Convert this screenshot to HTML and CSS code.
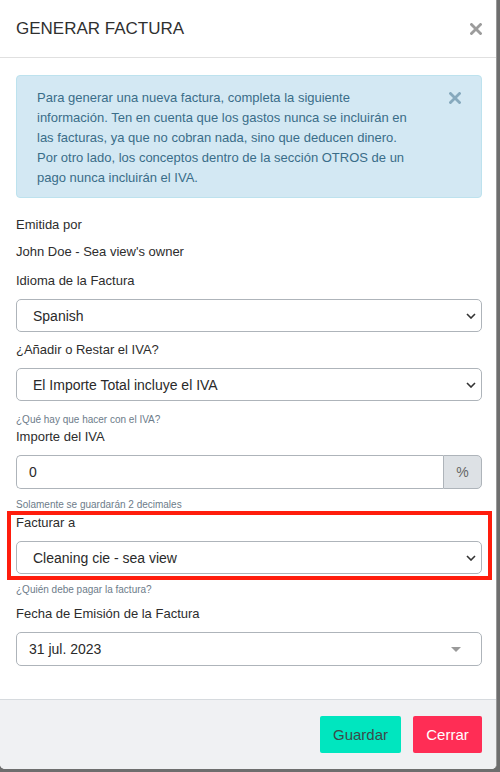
FILE: index.html
```html
<!DOCTYPE html>
<html lang="es">
<head>
<meta charset="utf-8">
<title>Generar factura</title>
<link rel="stylesheet" href="styles.css">
</head>
<body>
<div class="modal">
  <div class="modal-header">
    <h4 class="modal-title">GENERAR FACTURA</h4>
    <span class="close">
      <svg width="12" height="12" viewBox="0 0 12 12"><path d="M1.5 1.5L10.5 10.5M10.5 1.5L1.5 10.5" stroke="#9c9c9c" stroke-width="2.8" stroke-linecap="square"/></svg>
    </span>
  </div>
  <div class="modal-body">
    <div class="alert">
      <p class="alert-text">Para generar una nueva factura, completa la siguiente información. Ten en cuenta que los gastos nunca se incluirán en las facturas, ya que no cobran nada, sino que deducen dinero. Por otro lado, los conceptos dentro de la sección OTROS de un pago nunca incluirán el IVA.</p>
      <span class="alert-close">
        <svg width="12" height="12" viewBox="0 0 12 12"><path d="M1.5 1.5L10.5 10.5M10.5 1.5L1.5 10.5" stroke="#86a9bd" stroke-width="2.8" stroke-linecap="square"/></svg>
      </span>
    </div>

    <div class="label first">Emitida por</div>
    <div class="static">John Doe - Sea view's owner</div>

    <div class="label gap11">Idioma de la Factura</div>
    <div class="select">
      <span>Spanish</span>
      <svg class="chev" width="10" height="6" viewBox="0 0 10 6"><path d="M1 1l4 4 4-4" fill="none" stroke="#333" stroke-width="1.6"/></svg>
    </div>

    <div class="label gap9">¿Añadir o Restar el IVA?</div>
    <div class="select">
      <span>El Importe Total incluye el IVA</span>
      <svg class="chev" width="10" height="6" viewBox="0 0 10 6"><path d="M1 1l4 4 4-4" fill="none" stroke="#333" stroke-width="1.6"/></svg>
    </div>
    <div class="help gap12">¿Qué hay que hacer con el IVA?</div>

    <div class="label gap1">Importe del IVA</div>
    <div class="input-group">
      <div class="input">0</div>
      <div class="addon">%</div>
    </div>
    <div class="help gap9">Solamente se guardarán 2 decimales</div>

    <div class="highlight-wrap">
      <div class="label gap2">Facturar a</div>
      <div class="select">
        <span>Cleaning cie - sea view</span>
        <svg class="chev" width="10" height="6" viewBox="0 0 10 6"><path d="M1 1l4 4 4-4" fill="none" stroke="#333" stroke-width="1.6"/></svg>
      </div>
      <div class="highlight"></div>
    </div>
    <div class="help gap9">¿Quién debe pagar la factura?</div>

    <div class="label gap8">Fecha de Emisión de la Factura</div>
    <div class="date">
      <span>31 jul. 2023</span>
      <svg width="10" height="5" viewBox="0 0 10 5"><path d="M0 0h10L5 5z" fill="#9a9a9a"/></svg>
    </div>
  </div>
  <div class="modal-footer">
    <button class="btn btn-save">Guardar</button>
    <button class="btn btn-cancel">Cerrar</button>
  </div>
</div>
</body>
</html>
```
FILE: styles.css
```css
* { box-sizing: border-box; }
html, body { margin: 0; padding: 0; }
body {
  background: #6e6e6e;
  font-family: "Liberation Sans", Arial, Helvetica, sans-serif;
  color: #333;
  width: 500px;
  height: 772px;
  overflow: hidden;
}
.modal {
  width: 497px;
  background: #fff;
  border-radius: 0 0 5px 5px;
  overflow: hidden;
  border-right: 1px solid #9a9a9a;
}
.modal-header {
  height: 58px;
  border-bottom: 1px solid #e0e0e0;
  display: flex;
  align-items: center;
  justify-content: space-between;
  padding: 0 14px 0 16px;
}
.modal-title {
  margin: 0;
  font-size: 17px;
  font-weight: normal;
  color: #2f2f2f;
  line-height: 20px;
}
.close { display: flex; width: 12px; height: 12px; }
.modal-body {
  padding: 17px 14px 33px 16px;
}
.alert {
  background: #d3e8f3;
  border: 1px solid #bde2ee;
  border-radius: 4px;
  padding: 12px 20px 9px 20px;
  display: flex;
  justify-content: space-between;
  align-items: flex-start;
  color: #3a6d89;
}
.alert-text {
  margin: 0;
  width: 380px;
  font-size: 13px;
  line-height: 20px;
}
.alert-close {
  display: flex;
  align-items: center;
  height: 20px;
  width: 12px;
}
.label {
  font-size: 13px;
  line-height: 18px;
  color: #2d2d2d;
}
.static {
  font-size: 13px;
  line-height: 18px;
  color: #2d2d2d;
  margin-top: 9px;
}
.first { margin-top: 18px; }
.gap1 { margin-top: 1px; }
.gap2 { margin-top: 2px; }
.gap8 { margin-top: 8px; }
.gap9 { margin-top: 9px; }
.gap11 { margin-top: 11px; }
.gap12 { margin-top: 12px; }
.select {
  margin-top: 9px;
  height: 33px;
  border: 1px solid #aeb4ba;
  border-radius: 5px;
  display: flex;
  align-items: center;
  justify-content: space-between;
  padding: 0 5px 0 16px;
  font-size: 14px;
  color: #2a2a2a;
  background: #fff;
}
.help {
  font-size: 10px;
  line-height: 14px;
  color: #6d7c8a;
}
.input-group {
  margin-top: 9px;
  display: flex;
  height: 34px;
}
.input {
  flex: 1;
  border: 1px solid #aeb4ba;
  border-right: none;
  border-radius: 5px 0 0 5px;
  display: flex;
  align-items: center;
  padding-left: 12px;
  font-size: 14px;
  color: #2a2a2a;
}
.addon {
  width: 39px;
  background: #dde1e5;
  border: 1px solid #aeb4ba;
  border-radius: 0 5px 5px 0;
  display: flex;
  align-items: center;
  justify-content: center;
  font-size: 14px;
  color: #666;
}
.highlight-wrap { position: relative; }
.highlight {
  position: absolute;
  top: -3px;
  left: -9px;
  right: -10px;
  bottom: -6px;
  border: 4px solid #ff1d0d;
  pointer-events: none;
}
.date {
  margin-top: 9px;
  height: 34px;
  border: 1px solid #aeb4ba;
  border-radius: 5px;
  display: flex;
  align-items: center;
  justify-content: space-between;
  padding: 0 20px 0 12px;
  font-size: 14px;
  color: #2a2a2a;
}
.modal-footer {
  background: #f0f1f3;
  border-top: 1px solid #d6dade;
  padding: 16px 14px 16px 16px;
  display: flex;
  justify-content: flex-end;
  gap: 12px;
}
.btn {
  height: 37px;
  border: none;
  border-radius: 2px;
  padding: 0 13px;
  font-family: "Liberation Sans", Arial, Helvetica, sans-serif;
  font-size: 15px;
}
.btn-save { background: #00e6bf; color: #3c4a4a; width: 81px; }
.btn-cancel { background: #ff2d55; color: #fff; width: 69px; }
```
